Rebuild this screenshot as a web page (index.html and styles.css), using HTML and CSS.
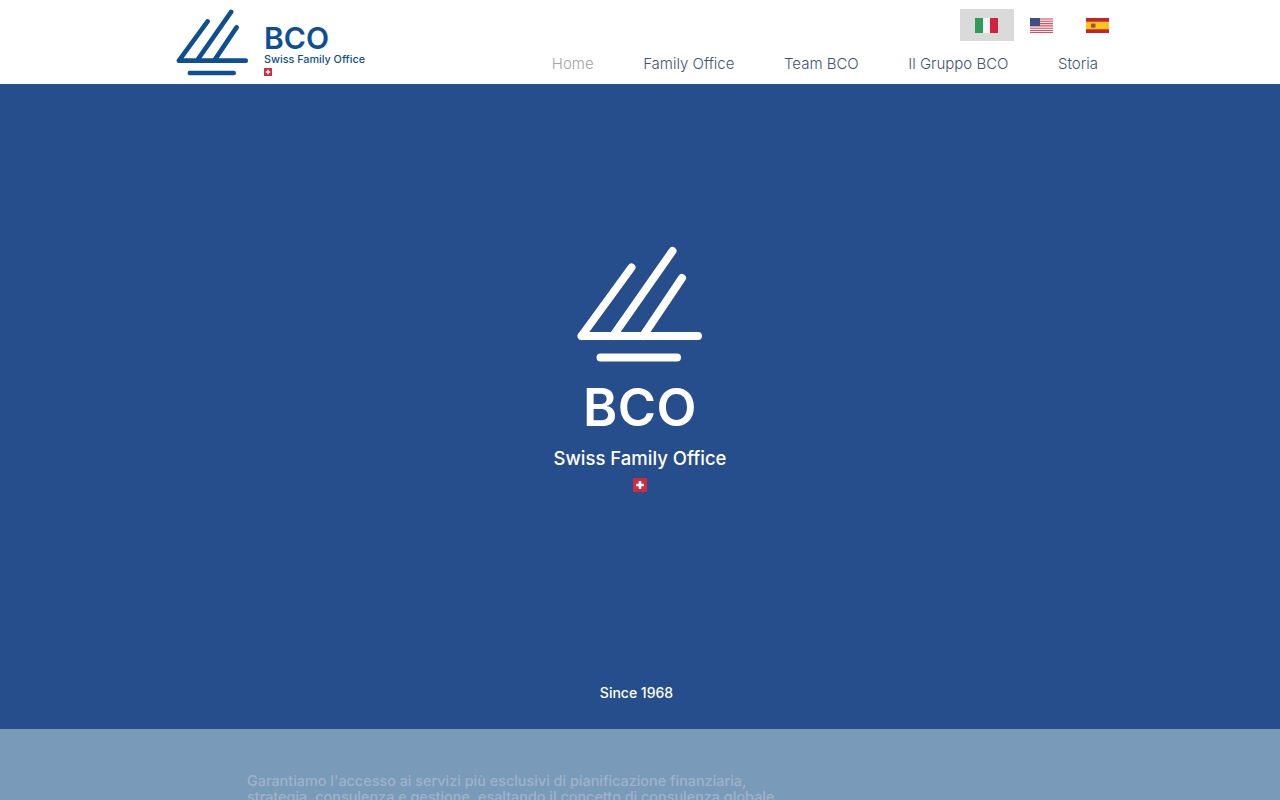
FILE: index.html
```html
<!DOCTYPE html>
<html lang="it">
  <head>
    <meta charset="UTF-8">
    <title>BCO Swiss Family Office</title>
    <link rel="stylesheet" href="styles.css">
  </head>
  <body>
    <svg class="defs" width="0" height="0" aria-hidden="true">
      <symbol id="mark" viewBox="0 0 130 122">
        <path d="M6.500 90 L56.500 21.500 M38 90 L97.500 5 M68 90 L107 32 M6.500 90 H123 M25.500 111.500 H102" fill="none" stroke="currentColor" stroke-width="8" stroke-linecap="round"/>
      </symbol>
      <symbol id="swiss" viewBox="0 0 14 14">
        <rect width="14" height="14" rx="1" fill="#d02a3c"/>
        <path d="M5.700 3 H8.300 V5.700 H11 V8.300 H8.300 V11 H5.700 V8.300 H3 V5.700 H5.700 Z" fill="#fff"/>
      </symbol>
    </svg>

    <header class="topbar">
      <a class="brand" href="#">
        <svg class="brand-mark"><use href="#mark"/></svg>
        <div class="brand-text">
          <div class="brand-name">BCO</div>
          <div class="brand-sub">Swiss Family Office</div>
          <svg class="brand-flag"><use href="#swiss"/></svg>
        </div>
      </a>
      <div class="topbar-right">
        <div class="langs">
          <a class="lang active" href="#">
            <svg class="flag" viewBox="0 0 23 15"><rect width="8" height="15" fill="#2f9a5a"/><rect x="8" width="7" height="15" fill="#f4f4f4"/><rect x="15" width="8" height="15" fill="#d3213f"/></svg>
          </a>
          <a class="lang" href="#">
            <svg class="flag" viewBox="0 0 23 15">
              <rect width="23" height="15" fill="#f3eef0"/>
              <path d="M0 1 H23 M0 3.300 H23 M0 5.600 H23 M0 7.900 H23 M0 10.200 H23 M0 12.500 H23 M0 14.500 H23" stroke="#d9525f" stroke-width="1.100"/>
              <rect width="10" height="8" fill="#3f4f86"/>
            </svg>
          </a>
          <a class="lang" href="#">
            <svg class="flag" viewBox="0 0 23 15"><rect width="23" height="15" fill="#c8202c"/><rect y="3.700" width="23" height="7.600" fill="#f7c51e"/><rect x="5" y="5.500" width="4.500" height="4.200" rx="1" fill="#a5502a"/></svg>
          </a>
        </div>
        <nav class="menu">
          <a class="current" href="#">Home</a>
          <a href="#">Family Office</a>
          <a href="#">Team BCO</a>
          <a href="#">Il Gruppo BCO</a>
          <a href="#">Storia</a>
        </nav>
      </div>
    </header>

    <section class="hero">
      <svg class="hero-mark"><use href="#mark"/></svg>
      <div class="hero-name">BCO</div>
      <div class="hero-sub">Swiss Family Office</div>
      <svg class="hero-flag"><use href="#swiss"/></svg>
      <p class="since">Since 1968</p>
    </section>

    <section class="intro">
      <p>Garantiamo l'accesso ai servizi più esclusivi di pianificazione finanziaria,<br>
        strategia, consulenza e gestione, esaltando il concetto di consulenza globale</p>
    </section>
  </body>
</html>
```

FILE: styles.css
```css
html, body { margin: 0; padding: 0; height: 100%; overflow: hidden; background: #fff; }
body { font-family: Inter, "Open Sans", sans-serif; }
a { text-decoration: none; color: inherit; }
.defs { display: block; height: 0; }

.topbar { height: 84px; display: flex; justify-content: space-between; padding: 0 155px 0 175px; box-sizing: border-box; }

.brand { display: flex; color: #0e4f92; }
.brand-mark { width: 75px; height: 70px; margin-top: 9px; }
.brand-text { margin: 23px 0 0 14px; }
.brand-name { font-size: 30px; line-height: 30px; font-weight: 600; }
.brand-sub { font-size: 10.800px; line-height: 13px; font-weight: 500; white-space: nowrap; }
.brand-flag { display: block; width: 8px; height: 8px; margin-top: 1.500px; }

.topbar-right { display: flex; flex-direction: column; align-items: flex-end; }
.langs { display: flex; margin-top: 9px; }
.lang { width: 55.500px; height: 32px; display: flex; align-items: center; justify-content: center; }
.lang.active { background: #dadada; width: 54px; }
.lang.active .flag { margin-right: 2px; }
.flag { width: 23px; height: 15px; }

.menu { display: flex; gap: 49.500px; margin-top: 14px; padding-right: 27px; font-size: 15px; line-height: 18px; font-weight: 300; color: #3f5378; }
.menu .current { color: #a3a3a3; }

.hero { height: 645px; background: #264d8c; color: #fff; display: flex; flex-direction: column; align-items: center; box-sizing: border-box; padding-top: 162px; }
.hero-mark { width: 130px; height: 122px; }
.hero-name { font-size: 52px; line-height: 52px; font-weight: 600; letter-spacing: .5px; margin-top: 14px; }
.hero-sub { font-size: 18.500px; line-height: 24px; font-weight: 500; margin-top: 12px; }
.hero-flag { width: 14px; height: 14px; margin-top: 8px; }
.since { margin: auto 7px 27px 0; font-size: 14px; line-height: 18px; font-weight: 500; }

.intro { height: 71px; overflow: hidden; background: #7a9ab9; padding: 44px 0 0 247px; box-sizing: border-box; }
.intro p { margin: 0; font-size: 14.400px; line-height: 16px; font-weight: 500; color: #9db3cb; white-space: nowrap; }
```
